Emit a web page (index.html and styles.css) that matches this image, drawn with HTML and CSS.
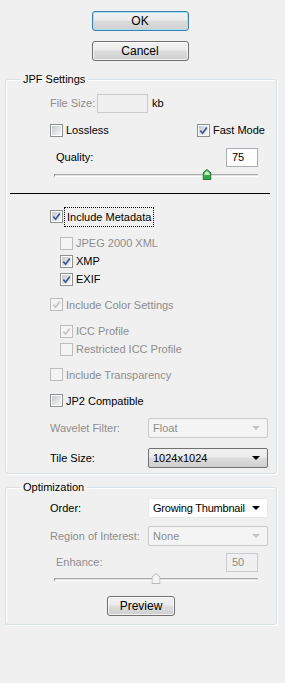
FILE: index.html
```html
<!DOCTYPE html>
<html lang="en">
<head>
  <meta charset="UTF-8" />
  <title>JPF Options</title>
  <link rel="stylesheet" href="styles.css">
</head>
<body>
  <div class="dialog">
    <div class="actions">
      <button class="btn btn-default">OK</button>
      <button class="btn">Cancel</button>
    </div>

    <!-- JPF Settings -->
    <fieldset class="group group-jpf">
      <legend>JPF Settings</legend>

      <div class="row row-first">
        <span class="label off label-size">File Size:</span>
        <span class="field field-off field-size"></span>
        <span class="unit">kb</span>
      </div>

      <div class="row">
        <label class="check check-lossless"><span class="cb"></span>Lossless</label>
        <label class="check"><span class="cb"><svg viewBox="0 0 9 9" width="9" height="9"><path d="M1.3 4.6 L3.6 7.2 L7.8 1.4" fill="none" stroke="#3f5a93" stroke-width="1.7"/></svg></span>Fast Mode</label>
      </div>

      <div class="row row-quality">
        <span class="label">Quality:</span>
        <span class="field">75</span>
      </div>

      <div class="slider">
        <div class="track"></div>
        <svg class="thumb" style="left: 75%" viewBox="0 0 9 11" width="9" height="11">
          <path d="M0.5 4 L4.5 0.5 L8.5 4 L8.5 10.5 L0.5 10.5 Z" fill="#39a845" stroke="#2e7a36"/>
          <path d="M2 4.3 L4.5 2 L7 4.3 L7 6 L2 6 Z" fill="#c8f0c8"/>
        </svg>
      </div>

      <div class="rule"></div>

      <div class="row row-check">
        <label class="check"><span class="cb"><svg viewBox="0 0 9 9" width="9" height="9"><path d="M1.3 4.6 L3.6 7.2 L7.8 1.4" fill="none" stroke="#3f5a93" stroke-width="1.7"/></svg></span><span class="focus">Include Metadata</span></label>
      </div>
      <div class="row row-sub row-sub-first">
        <label class="check off"><span class="cb cb-off"></span>JPEG 2000 XML</label>
      </div>
      <div class="row row-sub">
        <label class="check"><span class="cb"><svg viewBox="0 0 9 9" width="9" height="9"><path d="M1.3 4.6 L3.6 7.2 L7.8 1.4" fill="none" stroke="#3f5a93" stroke-width="1.7"/></svg></span>XMP</label>
      </div>
      <div class="row row-sub">
        <label class="check"><span class="cb"><svg viewBox="0 0 9 9" width="9" height="9"><path d="M1.3 4.6 L3.6 7.2 L7.8 1.4" fill="none" stroke="#3f5a93" stroke-width="1.7"/></svg></span>EXIF</label>
      </div>

      <div class="row row-check">
        <label class="check off"><span class="cb cb-off"><svg viewBox="0 0 9 9" width="9" height="9"><path d="M1.3 4.6 L3.6 7.2 L7.8 1.4" fill="none" stroke="#c4c4c4" stroke-width="1.7"/></svg></span>Include Color Settings</label>
      </div>
      <div class="row row-sub row-sub-first">
        <label class="check off"><span class="cb cb-off"><svg viewBox="0 0 9 9" width="9" height="9"><path d="M1.3 4.6 L3.6 7.2 L7.8 1.4" fill="none" stroke="#c4c4c4" stroke-width="1.7"/></svg></span>ICC Profile</label>
      </div>
      <div class="row row-sub">
        <label class="check off"><span class="cb cb-off"></span>Restricted ICC Profile</label>
      </div>

      <div class="row row-check">
        <label class="check off"><span class="cb cb-off"></span>Include Transparency</label>
      </div>
      <div class="row row-check">
        <label class="check"><span class="cb"></span>JP2 Compatible</label>
      </div>

      <div class="row row-select">
        <span class="label off label-select">Wavelet Filter:</span>
        <span class="select select-off">Float<i class="arrow"></i></span>
      </div>
      <div class="row row-select row-tile">
        <span class="label label-select">Tile Size:</span>
        <span class="select select-hot">1024x1024<i class="arrow"></i></span>
      </div>
    </fieldset>

    <!-- Optimization -->
    <fieldset class="group group-opt">
      <legend>Optimization</legend>

      <div class="row row-order">
        <span class="label label-select">Order:</span>
        <span class="select select-tight">Growing Thumbnail<i class="arrow"></i></span>
      </div>
      <div class="row row-select">
        <span class="label off label-select">Region of Interest:</span>
        <span class="select select-off">None<i class="arrow"></i></span>
      </div>
      <div class="row row-enhance">
        <span class="label off">Enhance:</span>
        <span class="field field-off">50</span>
      </div>
      <div class="slider slider-opt">
        <div class="track"></div>
        <svg class="thumb" style="left: 50%" viewBox="0 0 9 11" width="9" height="11">
          <path d="M0.5 4 L4.5 0.5 L8.5 4 L8.5 10.5 L0.5 10.5 Z" fill="#f4f4f4" stroke="#b9b9b9"/>
        </svg>
      </div>
      <div class="row row-preview">
        <button class="btn btn-preview">Preview</button>
      </div>
    </fieldset>
  </div>
</body>
</html>
```

FILE: styles.css
```css
html, body {
  margin: 0;
  padding: 0;
  background: #f0f0f0;
  font-family: Tahoma, "Liberation Sans", Arial, sans-serif;
  font-size: 11px;
  color: #000;
}

.dialog {
  width: 285px;
  height: 683px;
  padding-top: 11px;
  box-sizing: border-box;
}

/* Кнопки сверху */
.actions {
  display: flex;
  flex-direction: column;
  align-items: center;
  gap: 10px;
  padding-right: 5px;
}

.btn {
  width: 97px;
  height: 20px;
  padding: 0;
  font: inherit;
  font-size: 12px;
  color: #000;
  border: 1px solid #707070;
  border-radius: 3px;
  background: linear-gradient(#f2f2f2 0%, #ebebeb 45%, #dddddd 50%, #cfcfcf 100%);
  box-shadow: inset 0 0 0 1px rgba(255,255,255,0.7);
}

.btn-default {
  border-color: #3c7fb1;
  box-shadow: inset 0 0 0 1px #a6e1f7;
}

.btn-preview {
  width: 68px;
}

/* Группы */
.group {
  margin: 11px 8px 0 5px;
  padding: 0 7px 5px 44px;
  border: 1px solid #d5dfe5;
  border-radius: 3px;
  box-shadow: inset 1px 1px 0 #fff, 1px 1px 0 #fff;
}

.group legend {
  margin-left: -30px;
  padding: 0 3px;
  line-height: 14px;
  font-size: 11px;
}

.group-opt {
  margin-top: 6px;
  padding-bottom: 8px;
}

.row {
  display: flex;
  align-items: center;
  height: 20px;
  margin-top: 7px;
}

.row-first {
  margin-top: 7px;
}

.label {
  white-space: nowrap;
}

.off {
  color: #8d8d8d;
}

.label-size {
  width: 47px;
}

.label-select {
  width: 98px;
}

.unit {
  margin-left: 4px;
}

.field {
  box-sizing: border-box;
  width: 32px;
  height: 19px;
  margin-left: auto;
  padding: 2px 0 0 5px;
  border: 1px solid #abadb3;
  border-top-color: #aaaeb4;
  background: #fff;
  line-height: 13px;
}

.field-off {
  border-color: #c9cccf;
  background: #f0f0f0;
  color: #8d8d8d;
}

.field-size {
  width: 51px;
  margin-left: 0;
}

/* Чекбоксы */
.check {
  display: flex;
  align-items: center;
  white-space: nowrap;
}

.check-lossless {
  width: 147px;
}

.cb {
  box-sizing: border-box;
  width: 13px;
  height: 13px;
  margin-right: 3px;
  padding: 1px;
  border: 1px solid #8e8f8f;
  background: linear-gradient(135deg, #c6cace, #f6f6f6) content-box, #fff;
  display: flex;
  align-items: center;
  justify-content: center;
}

.cb svg {
  display: block;
}

.cb-off {
  border-color: #bcbcbc;
  background: #f4f4f4;
}

.focus {
  outline: 1px dotted #000;
  outline-offset: 1px;
  padding: 0 1px;
  line-height: 16px;
}

.row-quality {
  padding: 0 11px 0 6px;
}

.row-check {
  height: 19px;
}

.row-sub {
  height: 18px;
  margin-top: 0;
  padding-left: 10px;
}

.row-sub-first {
  margin-top: 8px;
}

/* Слайдер */
.slider {
  position: relative;
  height: 14px;
  margin: 1px 11px 0 4px;
}

.track {
  position: relative;
  top: 6px;
  height: 1px;
  border-top: 1px solid #a9a9a9;
  border-bottom: 1px solid #fff;
  background: #e3e3e3;
  border-left: 1px solid #8a8a8a;
}

.thumb {
  position: absolute;
  top: 1px;
  transform: translateX(-50%);
}

.slider-opt {
  margin-top: 0;
}

.rule {
  height: 1px;
  margin: 11px -1px 0 -40px;
  background: #000;
}

.rule + .row-check {
  margin-top: 13px;
}

/* Выпадающие списки */
.select {
  box-sizing: border-box;
  display: flex;
  align-items: center;
  width: 120px;
  height: 20px;
  padding: 0 7px 0 4px;
  border: 1px solid #e6e9ec;
  border-radius: 2px;
  background: #fff;
  white-space: nowrap;
}

.select-tight {
  letter-spacing: -0.2px;
}

.arrow {
  margin-left: auto;
  width: 0;
  height: 0;
  border-left: 4px solid transparent;
  border-right: 4px solid transparent;
  border-top: 4px solid #000;
}

.select-off {
  border-color: #c9c9c9;
  background: #f4f4f4;
  color: #8d8d8d;
}

.select-off .arrow {
  border-top-color: #c4c4c4;
}

.select-hot {
  border-color: #707070;
  background: linear-gradient(#f2f2f2 0%, #ebebeb 45%, #dddddd 50%, #cfcfcf 100%);
}

.row-select {
  margin-top: 8px;
}

.row-tile {
  margin-top: 10px;
}

.row-order {
  margin-top: 4px;
}

.row-enhance {
  margin-top: 6px;
  padding: 0 11px 0 6px;
}

.row-preview {
  justify-content: center;
  margin-top: 10px;
  padding-right: 37px;
}
```
